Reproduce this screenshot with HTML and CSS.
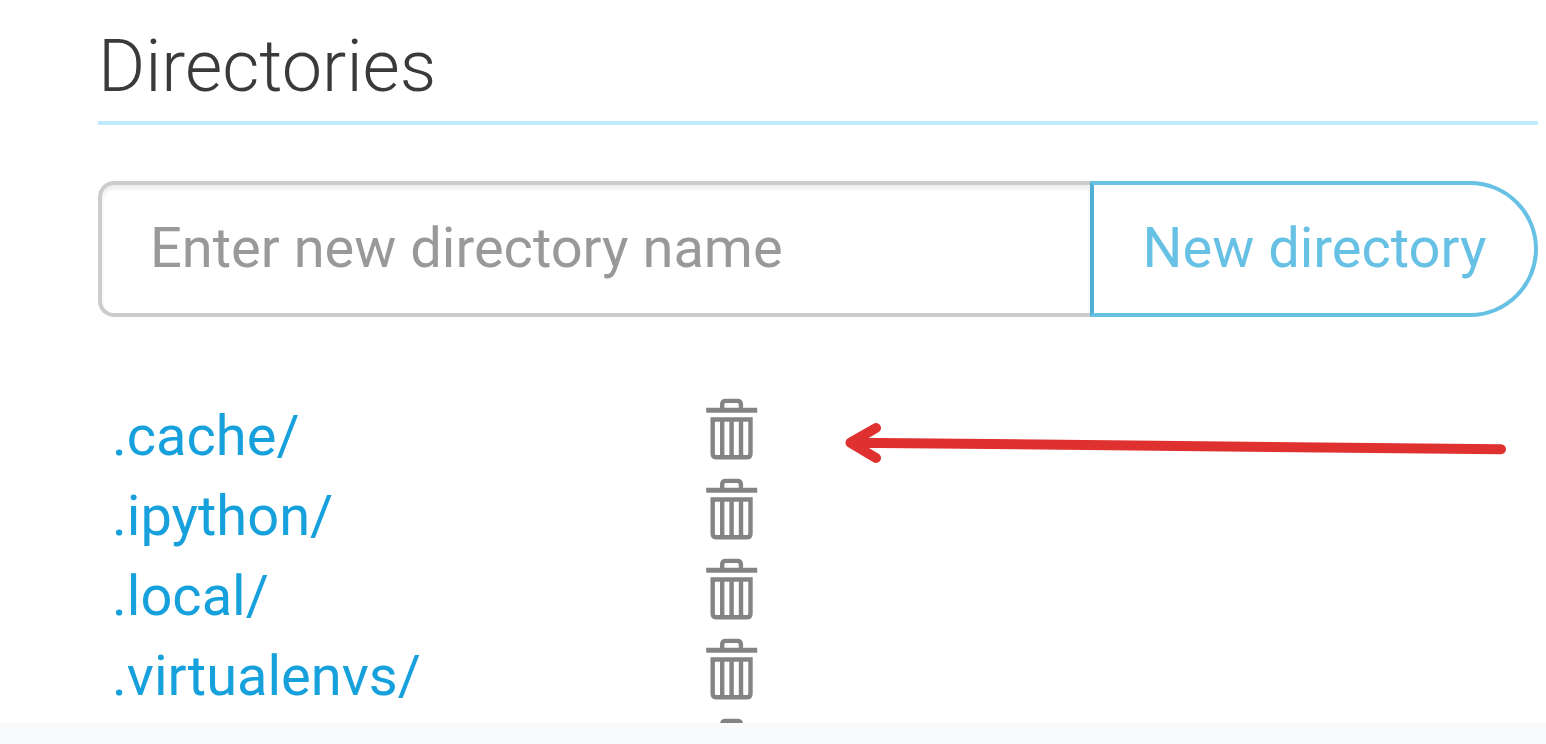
FILE: index.html
```
<!DOCTYPE html>
<html lang="en">
<head>
    <meta charset="UTF-8">
    <meta name="viewport" content="width=device-width, initial-scale=1.0">
    <title>Directories</title>
    <link rel="stylesheet" href="styles.css">
</head>
<body>
    <!-- Trash icon, used once per row -->
    <svg class="sprite" xmlns="http://www.w3.org/2000/svg">
        <symbol id="trash" viewBox="0 0 52 64">
            <path d="M0.200 11.700h51v5h-51z" fill="#848484"/>
            <path d="M16.200 12.500V8.400q0-3.500 3.500-3.500h11.700q3.500 0 3.500 3.500v4.100" fill="none" stroke="#848484" stroke-width="4.400"/>
            <path d="M6.700 23.500h37.800v34.200q0 3.600-3.600 3.600H10.300q-3.600 0-3.600-3.600zM16.200 23v38M25.600 23v38M35 23v38" fill="none" stroke="#848484" stroke-width="4.400"/>
        </symbol>
    </svg>

    <main class="files">
        <h1>Directories</h1>

        <form class="new-directory">
            <input type="text" placeholder="Enter new directory name">
            <button type="button">New directory</button>
        </form>

        <!-- Directory list -->
        <ul class="directory-list">
            <li><a href="#">.cache/</a><svg class="trash"><use href="#trash"/></svg></li>
            <li><a href="#">.ipython/</a><svg class="trash"><use href="#trash"/></svg></li>
            <li><a href="#">.local/</a><svg class="trash"><use href="#trash"/></svg></li>
            <li><a href="#">.virtualenvs/</a><svg class="trash"><use href="#trash"/></svg></li>
            <li><a href="#"></a><svg class="trash"><use href="#trash"/></svg></li>
        </ul>

        <svg class="arrow" viewBox="0 0 670 50">
            <path d="M656 29.200L5.500 22.700M31 8L5.500 22.700L31 38" fill="none" stroke="#e03131" stroke-width="10" stroke-linecap="round" stroke-linejoin="round"/>
        </svg>
    </main>
</body>
</html>
```

FILE: styles.css
```
* {
    box-sizing: border-box;
}

body {
    margin: 0;
    height: 744px;
    overflow: hidden;
    background-color: #f9fafc;
    font-family: Roboto, sans-serif;
    font-size: 56px;
}

.sprite {
    display: none;
}

.files {
    position: relative;
    height: 723px;
    padding: 27px 8px 0 98px;
    overflow: hidden;
    background-color: #fff;
}

h1 {
    height: 98px;
    margin: 0 0 56px;
    border-bottom: 4px solid #bdecfe;
    color: #3a3a3a;
    font-size: 72px;
    font-weight: 300;
    line-height: 80px;
}

/* Form for a new directory */
.new-directory {
    display: flex;
    height: 136px;
    margin-bottom: 79px;
}

.new-directory input {
    flex: 1;
    min-width: 0;
    padding: 0 48px 2px;
    border: 4px solid #ccc;
    border-right: none;
    border-radius: 16px 0 0 16px;
    box-shadow: inset 0 4px 4px rgba(0, 0, 0, 0.075);
    font: inherit;
}

.new-directory input::placeholder {
    color: #999;
}

.new-directory button {
    width: 448px;
    padding: 0 0 2px 1px;
    border: 4px solid #66c1e5;
    border-left-color: #4fb0d4;
    border-radius: 0 68px 68px 0;
    background-color: #fff;
    color: #66c1e5;
    font: inherit;
}

/* Directory list */
.directory-list {
    margin: 0;
    padding: 0 0 0 14px;
    list-style: none;
}

.directory-list li {
    display: flex;
    height: 80px;
    line-height: 80px;
}

.directory-list a {
    width: 594px;
    color: #17a1dc;
    text-decoration: none;
}

.trash {
    width: 52px;
    height: 64px;
}

.arrow {
    position: absolute;
    top: 420px;
    left: 845px;
    width: 670px;
    height: 50px;
}
```
